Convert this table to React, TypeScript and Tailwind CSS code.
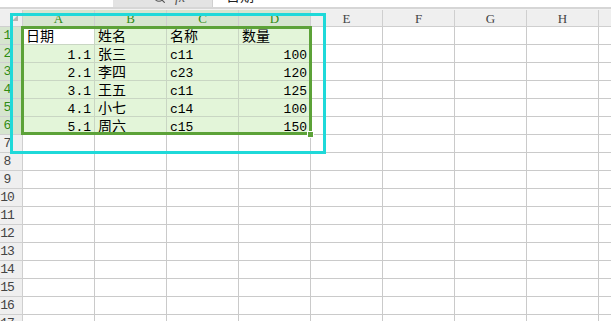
import { Search } from 'lucide-react';

const columns = ['A', 'B', 'C', 'D', 'E', 'F', 'G', 'H', 'I'];

const rows: string[][] = [
  ['日期', '姓名', '名称', '数量'],
  ['1.1', '张三', 'c11', '100'],
  ['2.1', '李四', 'c23', '120'],
  ['3.1', '王五', 'c11', '125'],
  ['4.1', '小七', 'c14', '100'],
  ['5.1', '周六', 'c15', '150'],
];

const ROW_COUNT = 17;
const hanzi = /[\u4e00-\u9fff]/;

function cellAlign(r: number, c: number) {
  if (r === 0) return 'justify-start';
  return c === 0 || c === 3 ? 'justify-end' : 'justify-start';
}

export default function App() {
  return (
    <div className="relative w-[611px] h-[321px] overflow-hidden bg-white font-['Liberation_Mono','Noto_Sans_CJK_SC',monospace]">
      {/* Formula bar (scrolled partly out of view) */}
      <div className="flex items-end h-[7px] overflow-hidden">
        <div className="flex items-center h-[20px] w-[113px] shrink-0 pl-[37px] text-[13px] text-[#333] bg-white">
          H1
        </div>
        <div className="flex items-center h-[20px] w-[99px] shrink-0 bg-[#e3e3e3] pl-[40px] gap-[9px] text-[#555]">
          <Search size={13} strokeWidth={2} />
          <span className="font-['Liberation_Serif',serif] italic text-[14px]">fx</span>
        </div>
        <div className="flex items-center h-[20px] flex-1 pl-[13px] bg-white border-l border-[#d0d0d0] text-[14px] text-[#222]">
          日期
        </div>
      </div>
      <div className="h-[3px] border-t-2 border-[#d6d6d6] bg-[#f2f2f2]" />

      {/* Sheet grid */}
      <div className="grid grid-cols-[23px_repeat(9,72px)]">
        {/* corner */}
        <div className="relative h-[17px] bg-[#efefef] border-r border-b border-[#cfcfcf]">
          <div className="absolute right-[4px] bottom-[5px] w-[6px] h-[6px] bg-[#b5b5b5] [clip-path:polygon(100%_0,100%_100%,0_100%)]" />
        </div>
        {columns.map((col, c) => (
          <div
            key={col}
            className={`flex items-center justify-center h-[17px] border-r border-b border-[#cfcfcf] font-['Liberation_Serif',serif] text-[13px] leading-none ${
              c < 4 ? 'bg-[#d6e5cf] text-[#2f8c14]' : 'bg-[#efefef] text-[#444]'
            }`}
          >
            {col}
          </div>
        ))}

        {Array.from({ length: ROW_COUNT }, (_, r) => {
          const selectedRow = r < rows.length;
          return [
            <div
              key={`h${r}`}
              className={`flex items-center h-[18px] border-r border-b border-[#cfcfcf] text-[13px] leading-none ${
                selectedRow ? 'bg-[#d6e5cf] text-[#2f8c14]' : 'bg-[#efefef] text-[#444]'
              }`}
            >
              <span className="w-[14px] text-center tracking-[-1px]">{r + 1}</span>
            </div>,
            ...columns.map((col, c) => {
              const inRange = selectedRow && c < 4;
              const active = r === 0 && c === 0;
              const value = inRange ? rows[r][c] : '';
              return (
                <div
                  key={`${col}${r}`}
                  className={`flex items-end h-[18px] px-[3px] border-r border-b whitespace-nowrap overflow-hidden leading-none text-black ${
                    hanzi.test(value) ? 'text-[14px]' : 'text-[13px]'
                  } ${cellAlign(r, c)} ${
                    active
                      ? 'bg-white border-[#c9d6c3]'
                      : inRange
                      ? 'bg-[#e3f5d9] border-[#c9d6c3]'
                      : 'bg-white border-[#cacaca]'
                  }`}
                >
                  {value}
                </div>
              );
            }),
          ];
        })}
      </div>

      {/* Copy range outline */}
      <div className="absolute left-[10px] top-[13px] w-[316px] h-[141px] border-[3px] border-[#1fd9d9] pointer-events-none" />
      {/* Selected range outline + fill handle */}
      <div className="absolute left-[21px] top-[26px] w-[291px] h-[109px] border-[3px] border-[#5ca238] pointer-events-none" />
      <div className="absolute left-[307px] top-[131px] w-[7px] h-[7px] bg-[#5ca238] border border-white" />
    </div>
  );
}
